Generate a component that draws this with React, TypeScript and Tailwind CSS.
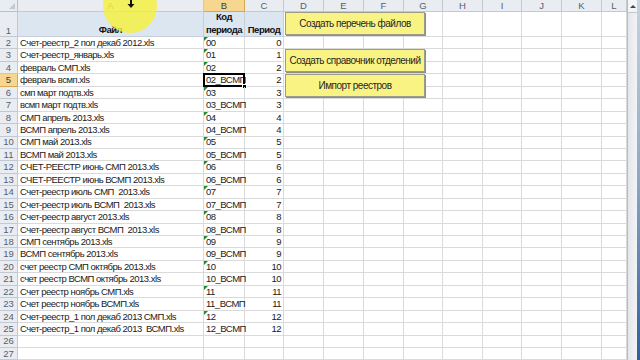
import React from "react";

const cols = ["A", "B", "C", "D", "E", "F", "G", "H", "I", "J", "K", "L"];

const data: [string, string, string][] = [
  ["Счет-реестр_2 пол декаб 2012.xls", "00", "0"],
  ["Счет-реестр_январь.xls", "01", "1"],
  ["февраль СМП.xls", "02", "2"],
  ["февраль всмп.xls", "02_ВСМП", "2"],
  ["смп март подтв.xls", "03", "3"],
  ["всмп март подтв.xls", "03_ВСМП", "3"],
  ["СМП апрель 2013.xls", "04", "4"],
  ["ВСМП апрель 2013.xls", "04_ВСМП", "4"],
  ["СМП май 2013.xls", "05", "5"],
  ["ВСМП май 2013.xls", "05_ВСМП", "5"],
  ["СЧЕТ-РЕЕСТР июнь СМП 2013.xls", "06", "6"],
  ["СЧЕТ-РЕЕСТР июнь ВСМП 2013.xls", "06_ВСМП", "6"],
  ["Счет-реестр июль СМП  2013.xls", "07", "7"],
  ["Счет-реестр июль ВСМП  2013.xls", "07_ВСМП", "7"],
  ["Счет-реестр август 2013.xls", "08", "8"],
  ["Счет-реестр август ВСМП  2013.xls", "08_ВСМП", "8"],
  ["СМП сентябрь 2013.xls", "09", "9"],
  ["ВСМП сентябрь 2013.xls", "09_ВСМП", "9"],
  ["счет реестр СМП октябрь 2013.xls", "10", "10"],
  ["счет реестр ВСМП октябрь 2013.xls", "10_ВСМП", "10"],
  ["Счет реестр ноябрь СМП.xls", "11", "11"],
  ["Счет реестр ноябрь ВСМП.xls", "11_ВСМП", "11"],
  ["Счет-реестр_1 пол декаб 2013 СМП.xls", "12", "12"],
  ["Счет-реестр_1 пол декаб 2013  ВСМП.xls", "12_ВСМП", "12"],
  ["", "", ""],
  ["", "", ""],
];

const gridCls =
  "grid grid-cols-[18px_186px_41px_39px_40px_40px_40px_39px_40px_39px_40px_40px_25px] grid-rows-[12px_25px_repeat(26,12.45px)]";

const hdr =
  "flex items-center justify-center text-[9.5px] tracking-normal leading-none bg-[#e9edf2] text-[#56606e] border-r border-b border-[#c3c9d2]";
const hdrSel =
  "flex items-center justify-center text-[9.5px] tracking-normal leading-none bg-[#f7d690] text-[#3a3a3a] border-r border-b border-[#d7a850]";

function Triangle() {
  return (
    <span className="absolute left-0 top-0 w-0 h-0 border-t-[4px] border-t-[#1f8a2e] border-r-[4px] border-r-transparent" />
  );
}

function Button({ label }: { label: string }) {
  return (
    <div className="w-[140px] h-[23px] flex items-center justify-center whitespace-nowrap bg-[#f9f384] border border-[#9c9c8c] shadow-[1px_1px_0_#8f8f80] text-[10px] text-[#262626]">
      {label}
    </div>
  );
}

export default function App() {
  return (
    <div className="relative w-[640px] h-[360px] overflow-hidden bg-white flex tracking-[-0.5px] font-[family-name:'Liberation_Sans',Arial,sans-serif]">
      <div className={gridCls}>
        {/* header row */}
        <div className="relative bg-[#e9edf2] border-r border-b border-[#b9c0ca]">
          <span className="absolute right-[2px] bottom-[2px] w-0 h-0 border-b-[6px] border-b-[#c3c9d1] border-l-[6px] border-l-transparent" />
        </div>
        {cols.map((c) => (
          <div key={c} className={c === "B" ? hdrSel : hdr}>
            {c}
          </div>
        ))}

        {/* row 1 */}
        <div className="flex items-end justify-center pb-[1px] text-[9.5px] tracking-normal leading-none bg-[#e9edf2] text-[#56606e] border-r border-b border-[#c3c9d2]">
          1
        </div>
        <div className="flex items-end justify-center bg-[#dce6f1] border-r border-b border-[#c6cfd9] text-[9.5px] font-bold text-[#111] leading-[12.5px]">
          Файл
        </div>
        <div className="flex flex-col items-center justify-end bg-[#dce6f1] border-r border-b border-[#c6cfd9] text-[9.5px] font-bold text-[#111] leading-[12.5px]">
          <span>Код</span>
          <span>периода</span>
        </div>
        <div className="flex items-end justify-center bg-[#dce6f1] border-r border-b border-[#c6cfd9] text-[9.5px] font-bold text-[#111] leading-[12.5px]">
          Период
        </div>
        {cols.slice(3).map((c) => (
          <div key={"r1" + c} className="border-r border-b border-[#dadada]" />
        ))}

        {/* data rows */}
        {data.map(([a, b, cval], i) => {
          const rowNum = i + 2;
          const selected = rowNum === 5;
          const numeric = b !== "" && /^\d+$/.test(b);
          return (
            <React.Fragment key={rowNum}>
              <div className={selected ? hdrSel : hdr}>{rowNum}</div>
              <div className="flex items-center pl-[2px] whitespace-pre text-[9.5px] leading-none text-[#1a1a1a] border-r border-b border-[#dadada]">
                {a}
              </div>
              <div className="relative flex items-center pl-[2px] whitespace-pre text-[9.5px] leading-none text-[#1a1a1a] border-r border-b border-[#dadada]">
                {numeric && <Triangle />}
                {b}
                {selected && (
                  <>
                    <span className="absolute left-[-1px] top-[-1px] right-[-1px] bottom-[-1px] border-2 border-black" />
                    <span className="absolute right-[-3px] bottom-[-3px] w-[5px] h-[5px] bg-black border border-white" />
                  </>
                )}
              </div>
              <div className="flex items-center justify-end pr-[2px] text-[9.5px] leading-none text-[#1a1a1a] border-r border-b border-[#dadada]">
                {cval}
              </div>
              {cols.slice(3).map((c) => (
                <div key={rowNum + c} className="border-r border-b border-[#dadada]" />
              ))}
            </React.Fragment>
          );
        })}
      </div>

      {/* vertical scrollbar */}
      <div className="w-[10px] h-full flex flex-col bg-[#e7eaee] border-l border-[#b7bcc3]">
        <div className="h-[13px] flex items-center justify-center bg-[#f4f5f7] border-b border-[#c2c7ce]">
          <span className="w-0 h-0 border-l-[3px] border-l-transparent border-r-[3px] border-r-transparent border-b-[3px] border-b-[#3d4654]" />
        </div>
        <div className="flex-1 bg-gradient-to-r from-[#e4e7eb] to-[#f2f3f5]" />
      </div>
      <div className="w-[3px] h-full bg-gradient-to-b from-[#c9d3de] via-[#8ea6c2] to-[#2f5f9a]" />

      {/* buttons (shapes over the sheet) */}
      <div className="absolute left-[285px] top-[12px]">
        <Button label="Создать перечень файлов" />
      </div>
      <div className="absolute left-[285px] top-[49px] flex flex-col gap-[2px]">
        <Button label="Создать справочник отделений" />
        <Button label="Импорт реестров" />
      </div>

      {/* cursor highlight */}
      <div className="absolute left-[103px] top-[-21px] w-[54px] h-[54px] rounded-full bg-[rgba(245,240,60,0.82)]" />
      <svg className="absolute left-[127px] top-0" width="8" height="8" viewBox="0 0 8 8">
        <polygon points="3,0 5,0 5,4 7.5,4 4,8 0.5,4 3,4" fill="#111" />
      </svg>
    </div>
  );
}
